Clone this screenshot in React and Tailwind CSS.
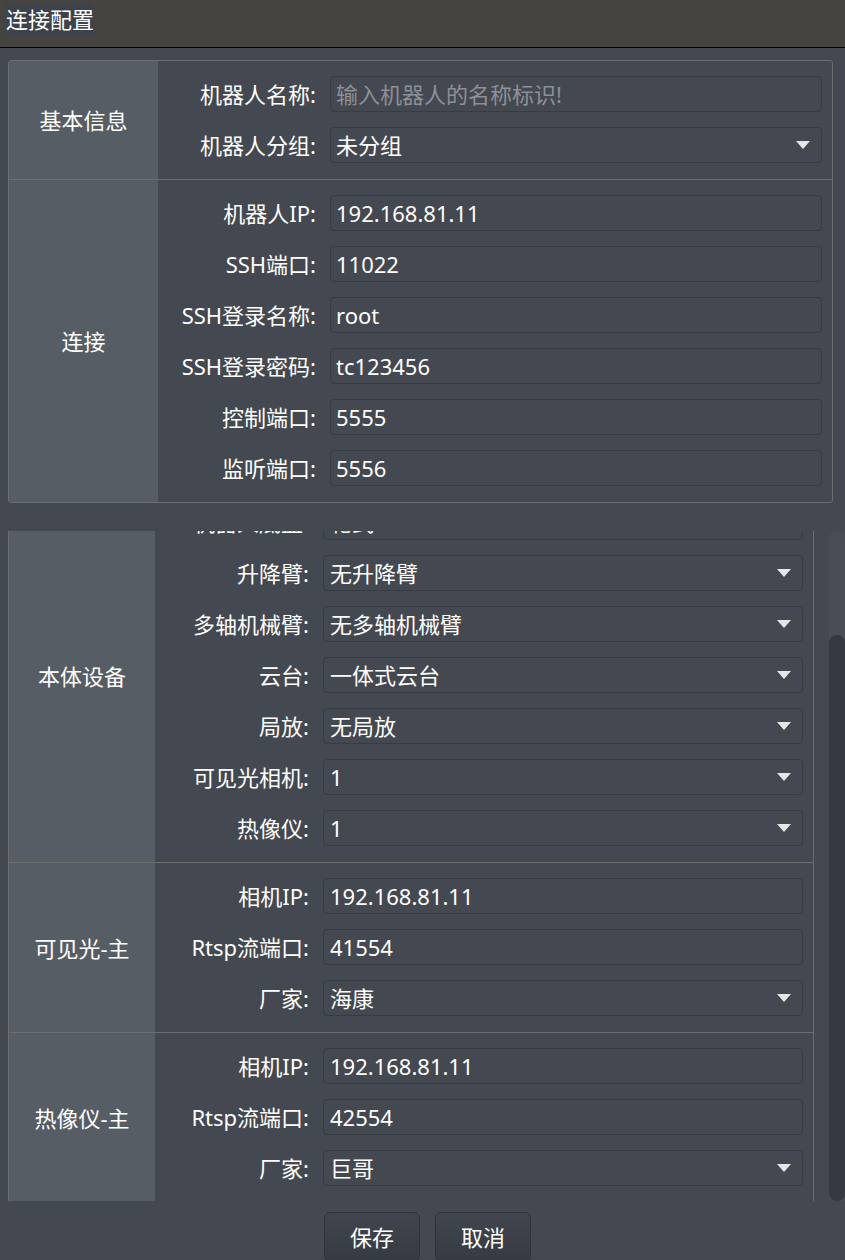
import { useState } from 'react'

const basicRows = [
  { label: '机器人名称:', placeholder: '输入机器人的名称标识!' },
  { label: '机器人分组:', value: '未分组', select: true },
]

const connRows = [
  { label: '机器人IP:', value: '192.168.81.11' },
  { label: 'SSH端口:', value: '11022' },
  { label: 'SSH登录名称:', value: 'root' },
  { label: 'SSH登录密码:', value: 'tc123456' },
  { label: '控制端口:', value: '5555' },
  { label: '监听端口:', value: '5556' },
]

const deviceRows = [
  { label: '机器人底盘:', value: '轮式', select: true },
  { label: '升降臂:', value: '无升降臂', select: true },
  { label: '多轴机械臂:', value: '无多轴机械臂', select: true },
  { label: '云台:', value: '一体式云台', select: true },
  { label: '局放:', value: '无局放', select: true },
  { label: '可见光相机:', value: '1', select: true },
  { label: '热像仪:', value: '1', select: true },
]

const visibleRows = [
  { label: '相机IP:', value: '192.168.81.11' },
  { label: 'Rtsp流端口:', value: '41554' },
  { label: '厂家:', value: '海康', select: true },
]

const thermalRows = [
  { label: '相机IP:', value: '192.168.81.11' },
  { label: 'Rtsp流端口:', value: '42554' },
  { label: '厂家:', value: '巨哥', select: true },
]

function Arrow() {
  return (
    <svg width="14" height="8" viewBox="0 0 14 8" className="shrink-0">
      <path d="M0 0 H14 L7 8 Z" fill="#e6e6e6" />
    </svg>
  )
}

function Field({ row, labelW, padL }) {
  return (
    <div className="flex items-center">
      <div className={`${labelW} shrink-0 pr-[14px] text-right text-white whitespace-nowrap`}>{row.label}</div>
      <div className={`flex-1 h-[36px] flex items-center ${padL} pr-[11px] rounded-[4px] border border-[#373b42] bg-[#444850]`}>
        {row.placeholder ? (
          <span className="flex-1 text-[#8d9096]">{row.placeholder}</span>
        ) : (
          <span className="flex-1 text-white">{row.value}</span>
        )}
        {row.select && <Arrow />}
      </div>
    </div>
  )
}

function Section({ name, rows, leftW, labelW, padL, divider }) {
  return (
    <div className={`flex ${divider ? 'border-t border-[#6c6d6e]' : ''}`}>
      <div className={`${leftW} shrink-0 bg-[#575d65] flex items-center justify-center text-white`}>{name}</div>
      <div className="flex-1 flex flex-col gap-[15px] pt-[15px] pb-[16px] pr-[10px]">
        {rows.map((r) => (
          <Field key={r.label} row={r} labelW={labelW} padL={padL} />
        ))}
      </div>
    </div>
  )
}

export default function App() {
  const [scroll] = useState(43)

  return (
    <div className="w-[845px] h-[1260px] overflow-hidden bg-[#444850] font-['Noto_Sans','Noto_Sans_CJK_SC',sans-serif] text-[22px] leading-none">
      {/* title bar */}
      <div className="h-[48px] bg-[#454441] border-b border-black">
        <div className="inline-flex items-center h-[32px] mt-[3px] ml-[6px] bg-[#3e424a] text-white text-[22px]">连接配置</div>
      </div>

      {/* basic + connection */}
      <div className="mt-[12px] ml-[8px] w-[825px] border border-[#6c6d6e] rounded-[3px] overflow-hidden">
        <Section name="基本信息" rows={basicRows} leftW="w-[149px]" labelW="w-[172px]" padL="pl-[5px]" />
        <Section name="连接" rows={connRows} leftW="w-[149px]" labelW="w-[172px]" padL="pl-[5px]" divider />
      </div>

      {/* device settings, scrolled */}
      <div className="flex mt-[28px]">
        <div className="ml-[8px] w-[806px] h-[670px] overflow-hidden">
          <div className="border border-[#6c6d6e]" style={{ marginTop: -scroll }}>
            <Section name="本体设备" rows={deviceRows} leftW="w-[146px]" labelW="w-[168px]" padL="pl-[6px]" />
            <Section name="可见光-主" rows={visibleRows} leftW="w-[146px]" labelW="w-[168px]" padL="pl-[6px]" divider />
            <Section name="热像仪-主" rows={thermalRows} leftW="w-[146px]" labelW="w-[168px]" padL="pl-[6px]" divider />
          </div>
        </div>
        <div className="ml-[15px] w-[16px] h-[670px] flex flex-col bg-[#494d55] rounded-t-[8px]">
          <div className="h-[104px] shrink-0" />
          <div className="flex-1 bg-[#353941] rounded-[8px]" />
        </div>
      </div>

      {/* actions */}
      <div className="flex justify-center gap-[15px] mt-[11px] pl-[10px]">
        <button className="w-[96px] h-[50px] rounded-[6px] border border-[#30343a] bg-gradient-to-b from-[#41454d] to-[#363a42] text-white text-[22px]">保存</button>
        <button className="w-[96px] h-[50px] rounded-[6px] border border-[#30343a] bg-gradient-to-b from-[#41454d] to-[#363a42] text-white text-[22px]">取消</button>
      </div>
    </div>
  )
}
